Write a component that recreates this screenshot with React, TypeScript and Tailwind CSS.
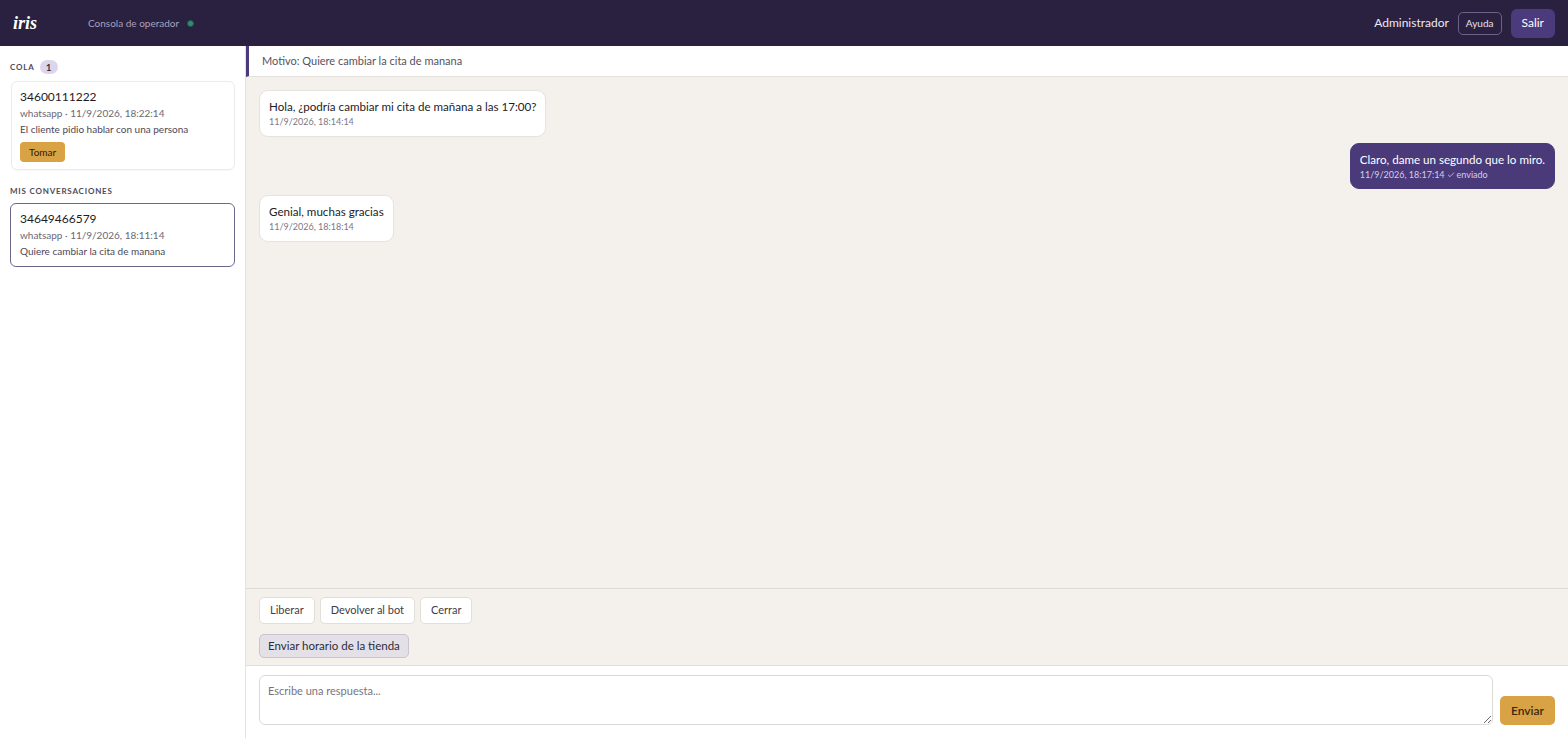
import { Check } from "lucide-react";

type Msg = { id: number; text: string; time: string; out?: boolean; status?: string };

const MESSAGES: Msg[] = [
  { id: 1, text: "Hola, ¿podría cambiar mi cita de mañana a las 17:00?", time: "11/9/2026, 18:14:14" },
  { id: 2, text: "Claro, dame un segundo que lo miro.", time: "11/9/2026, 18:17:14", out: true, status: "enviado" },
  { id: 3, text: "Genial, muchas gracias", time: "11/9/2026, 18:18:14" },
];

function Header() {
  return (
    <header className="flex h-[46px] shrink-0 items-center justify-between bg-[#2a2040] pl-[13px] pr-[13px]">
      <div className="flex items-center">
        <span className="w-[75px] font-['Liberation_Serif',serif] text-[18px] font-bold italic leading-none text-white">
          iris
        </span>
        <span className="text-[10px] text-[#a7a0bd]">Consola de operador</span>
        <span className="ml-[8px] h-[7px] w-[7px] rounded-full border border-[#1d5c4a] bg-[#2e8f70]" />
      </div>
      <div className="flex items-center">
        <span className="mr-[9px] text-[12px] text-[#ece9f4]">Administrador</span>
        <button className="mr-[9px] h-[23px] rounded-[5px] border border-[#6c6488] px-[7px] text-[10px] text-[#e6e2f0]">
          Ayuda
        </button>
        <button className="h-[29px] rounded-[6px] bg-[#4b3b7c] px-[11px] text-[12px] text-white">
          Salir
        </button>
      </div>
    </header>
  );
}

function Sidebar() {
  return (
    <aside className="flex w-[246px] shrink-0 flex-col border-r border-[#e3e1e6] bg-white px-[10px] pt-[14px]">
      <div className="flex items-center gap-[5px]">
        <span className="text-[8px] font-bold tracking-[0.1em] text-[#4d4a5c]">COLA</span>
        <span className="flex h-[14px] w-[18px] items-center justify-center rounded-full bg-[#dcd6ec] text-[10px] font-semibold text-[#2a2040]">
          1
        </span>
      </div>
      <div className="mt-[7px] ml-[1px] rounded-[6px] border border-[#eceaec] px-[8px] pt-[7px] pb-[7px] shadow-[0_1px_1px_rgba(0,0,0,0.03)]">
        <div className="text-[12px] leading-[16px] text-[#1e1b26]">34600111222</div>
        <div className="text-[10px] leading-[16px] text-[#6b6874]">whatsapp · 11/9/2026, 18:22:14</div>
        <div className="text-[10px] leading-[16px] text-[#4b4856]">El cliente pidio hablar con una persona</div>
        <button className="mt-[5px] h-[20px] rounded-[4px] bg-[#d9a244] px-[9px] text-[10px] text-[#2b1e08]">
          Tomar
        </button>
      </div>
      <div className="mt-[15px] text-[8px] font-bold tracking-[0.1em] text-[#4d4a5c]">MIS CONVERSACIONES</div>
      <div className="mt-[6px] rounded-[6px] border border-[#6e6688] px-[9px] pt-[7px] pb-[7px]">
        <div className="text-[12px] leading-[16px] text-[#1e1b26]">34649466579</div>
        <div className="text-[10px] leading-[16px] text-[#6b6874]">whatsapp · 11/9/2026, 18:11:14</div>
        <div className="text-[10px] leading-[16px] text-[#4b4856]">Quiere cambiar la cita de manana</div>
      </div>
    </aside>
  );
}

function Bubble({ msg }: { msg: Msg }) {
  if (msg.out) {
    return (
      <div className="flex justify-end">
        <div className="rounded-[9px] border border-[#4a3a7a] bg-[#4a3a7a] px-[9px] pt-[7px] pb-[6px]">
          <div className="text-[11.6px] leading-[17px] text-white">{msg.text}</div>
          <div className="flex items-center text-[9px] leading-[14px] text-[#d4cde8]">
            {msg.time}
            <Check className="mx-[2px] h-[8px] w-[8px]" strokeWidth={2.5} />
            {msg.status}
          </div>
        </div>
      </div>
    );
  }
  return (
    <div className="flex justify-start">
      <div className="rounded-[9px] border border-[#e6e3df] bg-white px-[9px] pt-[7px] pb-[7px]">
        <div className="text-[11.6px] leading-[17px] text-[#1e1b26]">{msg.text}</div>
        <div className="text-[9px] leading-[14px] text-[#7b7884]">{msg.time}</div>
      </div>
    </div>
  );
}

function Conversation() {
  return (
    <main className="flex min-w-0 flex-1 flex-col bg-[#f4f1ed]">
      <div className="flex h-[31px] shrink-0 items-center border-b border-[#e4e1dc] border-l-[3px] border-l-[#4b3b7c] bg-white pl-[13px] text-[11px] text-[#55525e]">
        Motivo: Quiere cambiar la cita de manana
      </div>
      <div className="flex flex-1 flex-col gap-[6px] overflow-y-auto px-[13px] pt-[13px]">
        {MESSAGES.map((m) => (
          <Bubble key={m.id} msg={m} />
        ))}
      </div>
      <div className="shrink-0 border-t border-[#dedad4] px-[13px] pt-[8px] pb-[7px]">
        <div className="flex gap-[5px]">
          {["Liberar", "Devolver al bot", "Cerrar"].map((label) => (
            <button
              key={label}
              className="h-[27px] rounded-[5px] border border-[#e2dfda] bg-white px-[10px] text-[11px] text-[#3f3c48]"
            >
              {label}
            </button>
          ))}
        </div>
        <button className="mt-[10px] h-[24px] rounded-[5px] border border-[#c9c4cf] bg-[#e4e0e8] px-[8px] text-[11.5px] text-[#2e2b38]">
          Enviar horario de la tienda
        </button>
      </div>
      <div className="flex shrink-0 items-end gap-[7px] border-t border-[#e2dfda] bg-white px-[13px] pt-[9px] pb-[13px]">
        <textarea
          placeholder="Escribe una respuesta..."
          className="h-[50px] flex-1 rounded-[6px] border border-[#dcdad6] px-[8px] py-[7px] text-[11px] text-[#1e1b26] outline-none placeholder:text-[#77747f]"
        />
        <button className="h-[29px] rounded-[5px] bg-[#d9a244] px-[11px] text-[12px] font-semibold text-[#3a2a0e]">
          Enviar
        </button>
      </div>
    </main>
  );
}

export default function App() {
  return (
    <div className="flex h-screen flex-col overflow-hidden font-['Lato','Noto_Sans',sans-serif]">
      <Header />
      <div className="flex min-h-0 flex-1">
        <Sidebar />
        <Conversation />
      </div>
    </div>
  );
}
